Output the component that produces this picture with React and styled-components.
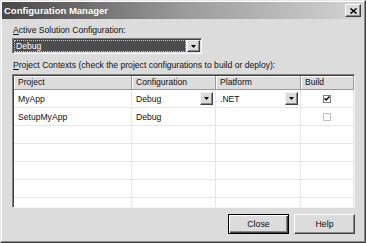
import React from "react";
import styled, { createGlobalStyle } from "styled-components";

const Global = createGlobalStyle`
  html, body { margin: 0; padding: 0; background: #dcdcdc; }
  body { font-family: "Liberation Sans", Arial, sans-serif; font-size: 8.6px; color: #000; }
  * { box-sizing: border-box; }
`;

const Window = styled.div`
  width: 366px;
  height: 243px;
  background: #dcdcdc;
  border-top: 1px solid #e8e8e8;
  border-left: 1px solid #e8e8e8;
  border-right: 1px solid #404040;
  border-bottom: 1px solid #404040;
  box-shadow: inset -1px -1px 0 #8a8a8a, inset 1px 1px 0 #ffffff;
  display: flex;
  flex-direction: column;
  padding: 1px 2px 2px 1px;
`;

const TitleBar = styled.div`
  height: 17px;
  background: linear-gradient(to right, #474747 0%, #9a9a9a 50%, #d4d4d4 100%);
  display: flex;
  align-items: center;
  justify-content: space-between;
  padding: 0 2px 0 2px;
`;

const Title = styled.span`
  color: #fff;
  font-weight: bold;
  font-size: 9.5px;
`;

const CloseBtn = styled.div`
  width: 16px;
  height: 13px;
  background: #dcdcdc;
  border-top: 1px solid #fff;
  border-left: 1px solid #fff;
  border-right: 1px solid #404040;
  border-bottom: 1px solid #404040;
  box-shadow: inset -1px -1px 0 #8a8a8a;
  display: flex;
  align-items: center;
  justify-content: center;
`;

const Body = styled.div`
  flex: 1;
  display: flex;
  flex-direction: column;
  padding: 5px 9px 0 10px;
`;

const Label = styled.div`
  height: 12px;
  line-height: 12px;
  padding-left: 1px;
  margin-bottom: ${(p) => p.$mb || 0}px;
  color: #111;
  u { text-decoration: underline; }
`;

const Combo = styled.div`
  width: 190px;
  height: 16px;
  background: #fff;
  border-top: 1px solid #808080;
  border-left: 1px solid #808080;
  border-right: 1px solid #fff;
  border-bottom: 1px solid #fff;
  box-shadow: inset 1px 1px 0 #404040, inset -1px -1px 0 #dcdcdc;
  display: flex;
  padding: 1px;
  margin-bottom: 5px;
`;

const ComboValue = styled.div`
  flex: 1;
  background: #4d4d4d;
  color: #fff;
  outline: 1px dotted #c8c8c8;
  outline-offset: -1px;
  padding-left: 2px;
  line-height: 12px;
  margin: 0 1px 0 0;
`;

const ArrowBtn = styled.div`
  width: ${(p) => p.$w || 13}px;
  height: ${(p) => p.$h || 12}px;
  background: #dcdcdc;
  border-top: 1px solid #f4f4f4;
  border-left: 1px solid #f4f4f4;
  border-right: 1px solid #404040;
  border-bottom: 1px solid #404040;
  box-shadow: inset -1px -1px 0 #8a8a8a;
  display: flex;
  align-items: center;
  justify-content: center;
  flex: none;
`;

const Arrow = () => (
  <svg width="5" height="3" viewBox="0 0 5 3">
    <path d="M0 0h5L2.5 3z" fill="#000" />
  </svg>
);

const Grid = styled.div`
  width: 343px;
  height: 134px;
  background: #fff;
  border-top: 1px solid #808080;
  border-left: 1px solid #808080;
  border-right: 1px solid #f4f4f4;
  border-bottom: 1px solid #f4f4f4;
  box-shadow: inset 1px 1px 0 #404040;
  padding: 1px 0 0 1px;
  overflow: hidden;
  display: grid;
  grid-template-columns: 118px 84px 85px 53px;
  grid-auto-rows: 18px;
  grid-template-rows: 14px;
  align-content: start;
`;

const Head = styled.div`
  background: #dcdcdc;
  border-right: 1px solid #9a9a9a;
  border-bottom: 1px solid #9a9a9a;
  box-shadow: inset 1px 1px 0 #fff;
  padding-left: 4px;
  line-height: 13px;
  white-space: nowrap;
  overflow: hidden;
  color: #111;
`;

const Cell = styled.div`
  border-right: 1px solid #e6e6e6;
  border-bottom: 1px solid #e6e6e6;
  display: flex;
  align-items: center;
  justify-content: ${(p) => (p.$center ? "center" : "space-between")};
  padding: 0 2px 0 4px;
  white-space: nowrap;
  color: #111;
`;

const Check = styled.div`
  width: 8px;
  height: 8px;
  border: 1px solid ${(p) => (p.$disabled ? "#c0c0c0" : "#808080")};
  background: #fff;
  display: flex;
  align-items: center;
  justify-content: center;
  margin-right: 2px;
`;

const Footer = styled.div`
  display: flex;
  justify-content: flex-end;
  gap: 5px;
  padding: 6px 0 0 0;
  margin-right: -1px;
`;

const Button = styled.button`
  width: 61px;
  height: 20px;
  font: inherit;
  font-size: 8.8px;
  background: #dcdcdc;
  color: #111;
  border-top: 1px solid ${(p) => (p.$default ? "#000" : "#fff")};
  border-left: 1px solid ${(p) => (p.$default ? "#000" : "#fff")};
  border-right: 1px solid ${(p) => (p.$default ? "#000" : "#404040")};
  border-bottom: 1px solid ${(p) => (p.$default ? "#000" : "#404040")};
  box-shadow: ${(p) =>
    p.$default
      ? "inset 1px 1px 0 #fff, inset -1px -1px 0 #404040, inset -2px -2px 0 #8a8a8a"
      : "inset -1px -1px 0 #8a8a8a"};
  padding: 0;
  margin: 0;
`;

const rows = [
  { project: "MyApp", config: "Debug", platform: ".NET", build: true, active: true },
  { project: "SetupMyApp", config: "Debug", platform: "", build: false, active: false },
];

export default function App() {
  const empty = Array.from({ length: 5 });
  return (
    <>
      <Global />
      <Window>
        <TitleBar>
          <Title>Configuration Manager</Title>
          <CloseBtn>
            <svg width="7" height="6" viewBox="0 0 7 6">
              <path d="M0.5 0.5L6.5 5.5M6.5 0.5L0.5 5.5" stroke="#000" strokeWidth="1.5" />
            </svg>
          </CloseBtn>
        </TitleBar>
        <Body>
          <Label $mb={2}>
            <u>A</u>ctive Solution Configuration:
          </Label>
          <Combo>
            <ComboValue>Debug</ComboValue>
            <ArrowBtn>
              <Arrow />
            </ArrowBtn>
          </Combo>
          <Label $mb={3}>
            <u>P</u>roject Contexts (check the project configurations to build or deploy):
          </Label>
          <Grid>
            <Head>Project</Head>
            <Head>Configuration</Head>
            <Head>Platform</Head>
            <Head>Build</Head>
            {rows.map((r) => (
              <React.Fragment key={r.project}>
                <Cell>{r.project}</Cell>
                <Cell>
                  {r.config}
                  {r.active && (
                    <ArrowBtn $w={13} $h={13}>
                      <Arrow />
                    </ArrowBtn>
                  )}
                </Cell>
                <Cell>
                  {r.platform}
                  {r.active && (
                    <ArrowBtn $w={13} $h={13}>
                      <Arrow />
                    </ArrowBtn>
                  )}
                </Cell>
                <Cell $center>
                  <Check $disabled={!r.build}>
                    {r.build && (
                      <svg width="6" height="5" viewBox="0 0 6 5">
                        <path d="M0.5 2.2L2.2 4L5.5 0.5" stroke="#000" strokeWidth="1.4" fill="none" />
                      </svg>
                    )}
                  </Check>
                </Cell>
              </React.Fragment>
            ))}
            {empty.map((_, i) => (
              <React.Fragment key={i}>
                <Cell />
                <Cell />
                <Cell />
                <Cell />
              </React.Fragment>
            ))}
          </Grid>
          <Footer>
            <Button $default>Close</Button>
            <Button>Help</Button>
          </Footer>
        </Body>
      </Window>
    </>
  );
}
